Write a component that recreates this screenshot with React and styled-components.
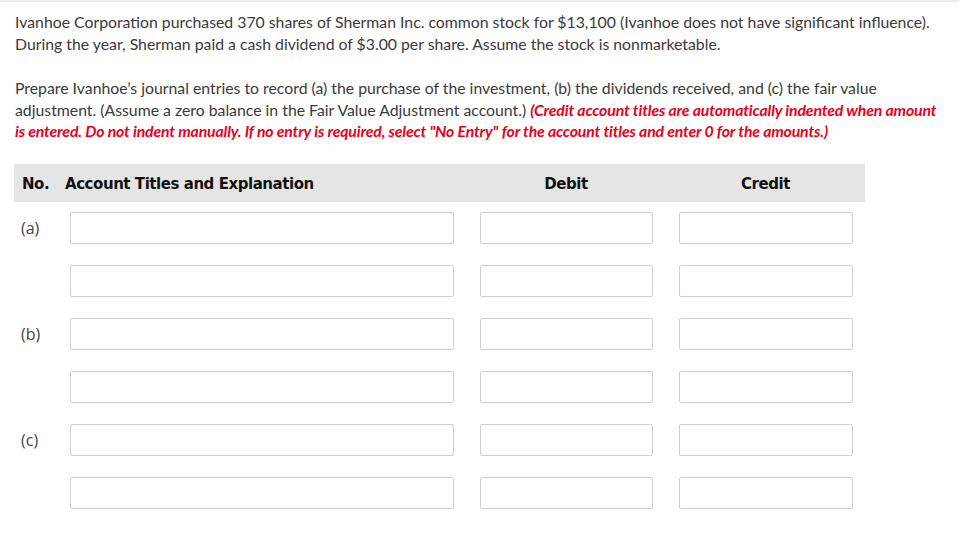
import React from 'react';
import styled, { createGlobalStyle } from 'styled-components';

const GlobalStyle = createGlobalStyle`
  html, body {
    margin: 0;
    padding: 0;
    background: #fff;
  }
`;

const Page = styled.div`
  width: 959px;
  min-height: 542px;
  box-sizing: border-box;
  border-top: 2px solid #ececec;
  padding: 9px 10px 0 15px;
  font-family: Lato, 'Open Sans', sans-serif;
  font-size: 15.8px;
  line-height: 21.5px;
  color: #3a3a3a;
  white-space: nowrap;
`;

const Para = styled.p`
  margin: 0 0 ${(p) => p.gap || 0}px 0;
`;

const Note = styled.span`
  color: #e8001c;
  font-weight: 700;
  font-style: italic;
  letter-spacing: -0.15px;
`;

const Table = styled.div`
  width: 851px;
  margin-left: -1px;
  display: grid;
  grid-template-columns: 51px 401px 200px 199px;
  row-gap: 21px;
`;

const HeadRow = styled.div`
  grid-column: 1 / -1;
  display: grid;
  grid-template-columns: subgrid;
  align-items: center;
  height: 38px;
  padding-top: 4px;
  box-sizing: border-box;
  background: #e5e5e5;
  margin-bottom: -11px;
`;

const HeadCell = styled.div`
  font-family: 'DejaVu Sans', Verdana, sans-serif;
  font-weight: 700;
  font-size: 15px;
  letter-spacing: -0.45px;
  color: #111;
  text-align: ${(p) => (p.center ? 'center' : 'left')};
  padding-left: ${(p) => p.pad || 0}px;
`;

const Label = styled.div`
  display: flex;
  align-items: center;
  padding: 3px 0 0 7px;
  font-family: 'Open Sans', sans-serif;
  font-size: 16px;
  color: #444;
`;

const Cell = styled.div`
  display: flex;
  justify-content: ${(p) => (p.center ? 'center' : 'flex-start')};
  padding-left: ${(p) => p.pad || 0}px;
`;

const Field = styled.input`
  box-sizing: border-box;
  width: ${(p) => p.w}px;
  height: 32px;
  border: 1px solid #cfcfcf;
  border-radius: 2px;
  background: #fff;
  margin: 0;
  padding: 0 6px;
  outline: none;
`;

const rows = [
  { label: '(a)' },
  { label: '' },
  { label: '(b)' },
  { label: '' },
  { label: '(c)' },
  { label: '' },
];

export default function App() {
  return (
    <>
      <GlobalStyle />
      <Page>
        <Para gap={23}>
          Ivanhoe Corporation purchased 370 shares of Sherman Inc. common stock for $13,100 (Ivanhoe does not have significant influence).
          <br />
          During the year, Sherman paid a cash dividend of $3.00 per share. Assume the stock is nonmarketable.
        </Para>
        <Para gap={22}>
          Prepare Ivanhoe’s journal entries to record (a) the purchase of the investment, (b) the dividends received, and (c) the fair value
          <br />
          adjustment. (Assume a zero balance in the Fair Value Adjustment account.){' '}
          <Note>
            (Credit account titles are automatically indented when amount
            <br />
            is entered. Do not indent manually. If no entry is required, select "No Entry" for the account titles and enter 0 for the amounts.)
          </Note>
        </Para>
        <Table>
          <HeadRow>
            <HeadCell pad={8}>No.</HeadCell>
            <HeadCell>Account Titles and Explanation</HeadCell>
            <HeadCell center>Debit</HeadCell>
            <HeadCell center>Credit</HeadCell>
          </HeadRow>
          {rows.map((r, i) => (
            <React.Fragment key={i}>
              <Label>{r.label}</Label>
              <Cell pad={5}>
                <Field w={384} />
              </Cell>
              <Cell center>
                <Field w={173} />
              </Cell>
              <Cell center>
                <Field w={174} />
              </Cell>
            </React.Fragment>
          ))}
        </Table>
      </Page>
    </>
  );
}
